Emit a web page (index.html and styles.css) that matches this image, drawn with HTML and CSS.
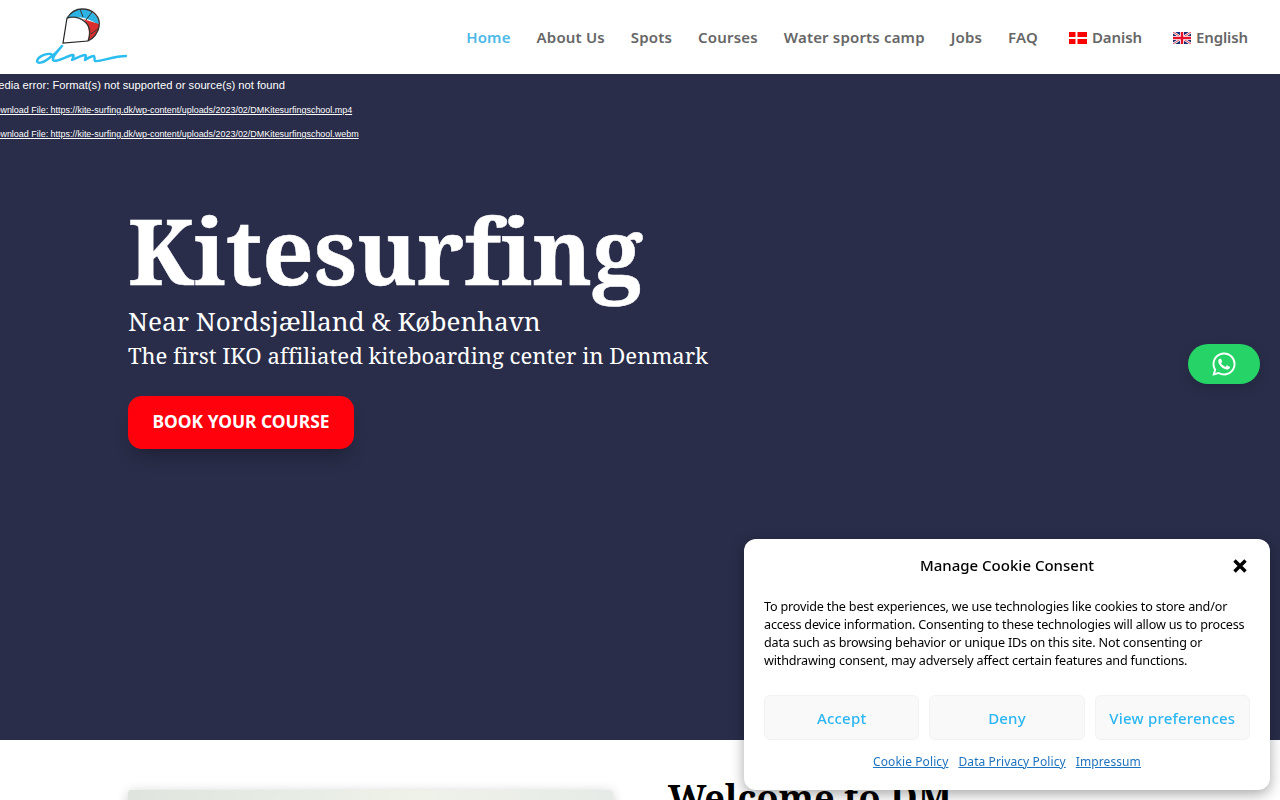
FILE: index.html
```html
<!DOCTYPE html>
<html lang="en">
<head>
    <meta charset="UTF-8">
    <title>Kitesurfing</title>
    <link rel="stylesheet" href="styles.css">
</head>
<body>
    <!-- Header -->
    <header class="header">
        <a class="logo" href="#">
            <svg width="92" height="58" viewBox="0 0 92 58">
                <path d="M32 10 C36 4 42 1 47 1 C55 1 62 7 64 14 L63 17 C56 11 43 7 32 10 Z" fill="#2eb4e4"/>
                <path d="M48 11 L64 16 C65 22 61 29 53 33 C55 25 54 16 48 11 Z" fill="#d9302f"/>
                <path d="M32 10 L28 35 L53 33" fill="none" stroke="#222" stroke-width="1.2"/>
                <path d="M32 10 C43 7 60 14 53 33" fill="none" stroke="#333" stroke-width="1.3"/>
                <path d="M32 10 C36 4 42 1 47 1 C58 1 66 9 64 19 C63 25 58 31 53 33" fill="none" stroke="#333" stroke-width="1.3"/>
                <path d="M45 1 L48 9 M57 4 L51 12 M64 20 L56 26" fill="none" stroke="#333" stroke-width="1"/>
                <path d="M16 46 C10 45 3 49 2 53 C2 56 8 55 13 51 C19 47 24 42 27 38 C22 44 17 49 18 52 C20 55 30 49 37 47 C40 46 38 50 37 52 C42 50 47 47 50 47 C52 47 50 50 50 52 C53 50 56 48 59 48 C60 49 59 51 60 53 C66 54 78 48 91 48" fill="none" stroke="#2bbdf0" stroke-width="2.4" stroke-linecap="round" stroke-linejoin="round"/>
            </svg>
        </a>
        <nav class="nav">
            <a class="nav-link active" href="#">Home</a>
            <a class="nav-link" href="#">About Us</a>
            <a class="nav-link" href="#">Spots</a>
            <a class="nav-link" href="#">Courses</a>
            <a class="nav-link" href="#">Water sports camp</a>
            <a class="nav-link" href="#">Jobs</a>
            <a class="nav-link" href="#">FAQ</a>
            <a class="nav-link lang first-lang" href="#">
                <svg class="flag" viewBox="0 0 18 12"><rect width="18" height="12" fill="#f00"/><path d="M0 6H18M7.5 0V12" stroke="#fff" stroke-width="2"/></svg>
                Danish
            </a>
            <a class="nav-link lang" href="#">
                <svg class="flag" viewBox="0 0 18 12"><rect width="18" height="12" fill="#1b2a73"/><path d="M0 0L18 12M18 0L0 12" stroke="#fff" stroke-width="2.4"/><path d="M0 0L18 12M18 0L0 12" stroke="#d8142a" stroke-width=".8"/><path d="M0 6H18M9 0V12" stroke="#fff" stroke-width="4"/><path d="M0 6H18M9 0V12" stroke="#e8112d" stroke-width="2.4"/></svg>
                English
            </a>
        </nav>
    </header>

    <!-- Hero mit Video-Fehler -->
    <section class="hero">
        <div class="media-error">
            <p class="media-msg">Media error: Format(s) not supported or source(s) not found</p>
            <p class="media-file"><a href="#">Download File: https://kite-surfing.dk/wp-content/uploads/2023/02/DMKitesurfingschool.mp4</a></p>
            <p class="media-file"><a href="#">Download File: https://kite-surfing.dk/wp-content/uploads/2023/02/DMKitesurfingschool.webm</a></p>
        </div>
        <div class="hero-text">
            <h1>Kitesurfing</h1>
            <h2>Near Nordsjælland &amp; København</h2>
            <h3>The first IKO affiliated kiteboarding center in Denmark</h3>
            <a class="book-btn" href="#">BOOK YOUR COURSE</a>
        </div>
    </section>

    <!-- Willkommen -->
    <section class="welcome">
        <div class="welcome-photo"></div>
        <h2 class="welcome-title">Welcome to DM</h2>
    </section>

    <!-- WhatsApp -->
    <a class="whatsapp" href="#">
        <svg width="24" height="24" viewBox="0 0 24 24">
            <path fill="#fff" fill-rule="evenodd" d="M12.04 0.5C5.7 0.5 .55 5.64 .55 11.98c0 2.03.53 4 1.54 5.74L.45 23.7l6.13-1.6a11.45 11.45 0 0 0 5.46 1.39c6.34 0 11.5-5.15 11.5-11.49 0-3.07-1.2-5.96-3.37-8.13A11.42 11.42 0 0 0 12.04 .5zm0 21.05c-1.72 0-3.4-.46-4.87-1.33l-.35-.21-3.64.95.97-3.55-.23-.36a9.51 9.51 0 0 1-1.46-5.07c0-5.27 4.3-9.56 9.58-9.56 2.56 0 4.96 1 6.77 2.81a9.5 9.5 0 0 1 2.8 6.76c0 5.28-4.3 9.56-9.57 9.56zm5.25-7.17c-.29-.14-1.7-.84-1.96-.94-.26-.1-.45-.14-.64.15-.19.29-.74.93-.9 1.12-.17.19-.33.22-.62.07-.29-.14-1.21-.45-2.3-1.42-.85-.76-1.43-1.7-1.6-1.98-.17-.29-.02-.44.13-.59.13-.13.29-.33.43-.5.14-.17.19-.29.29-.48.1-.19.05-.36-.02-.5-.07-.14-.64-1.55-.88-2.12-.23-.56-.47-.48-.64-.49h-.55c-.19 0-.5.07-.76.36-.26.29-1 .98-1 2.39 0 1.41 1.03 2.77 1.17 2.96.14.19 2.02 3.09 4.9 4.33.68.3 1.22.47 1.63.6.69.22 1.31.19 1.81.11.55-.08 1.7-.69 1.94-1.36.24-.67.24-1.24.17-1.36-.07-.12-.26-.19-.55-.34z"/>
        </svg>
    </a>

    <!-- Cookie Banner -->
    <div class="cookie">
        <div class="cookie-head">
            <span class="cookie-title">Manage Cookie Consent</span>
            <svg class="cookie-close" width="16" height="16" viewBox="0 0 16 16"><path d="M2.5 2.5L13.5 13.5M13.5 2.5L2.5 13.5" stroke="#000" stroke-width="3.4" fill="none"/></svg>
        </div>
        <p class="cookie-text">To provide the best experiences, we use technologies like cookies to store and/or access device information. Consenting to these technologies will allow us to process data such as browsing behavior or unique IDs on this site. Not consenting or withdrawing consent, may adversely affect certain features and functions.</p>
        <div class="cookie-btns">
            <button class="cookie-btn">Accept</button>
            <button class="cookie-btn">Deny</button>
            <button class="cookie-btn">View preferences</button>
        </div>
        <div class="cookie-links">
            <a href="#">Cookie Policy</a>
            <a href="#">Data Privacy Policy</a>
            <a href="#">Impressum</a>
        </div>
    </div>
</body>
</html>
```
FILE: styles.css
```css
html, body {
    height: 800px;
    overflow: hidden;
}
body {
    margin: 0;
    font-family: "Noto Sans", Arial, sans-serif;
    background: #fff;
}
a {
    text-decoration: none;
}
.header {
    height: 74px;
    display: flex;
    justify-content: space-between;
    align-items: center;
    padding: 0 32px 0 35px;
    background: #fff;
}
.logo {
    display: flex;
    margin-top: -1px;
}
.nav {
    display: flex;
    align-items: center;
    gap: 26px;
}
.nav-link {
    display: flex;
    align-items: center;
    font-size: 15px;
    font-weight: 600;
    letter-spacing: 0.17px;
    color: #666;
}
.nav-link.active {
    color: #4cb9e8;
}
.nav-link.lang {
    letter-spacing: -0.1px;
}
.first-lang {
    margin-left: 5px;
}
.lang + .lang {
    margin-left: 5px;
}
.flag {
    width: 18px;
    height: 12px;
    margin: 2px 5px 0 0;
}
.hero {
    height: 666px;
    background: #292d49;
    color: #fff;
    position: relative;
}
.media-error {
    position: absolute;
    top: 0;
    left: -11px;
    font-family: "Liberation Sans", Arial, sans-serif;
}
.media-msg {
    margin: 5px 0 0;
    font-size: 11.2px;
    line-height: 13px;
}
.media-file {
    margin: 12px 0 0;
    font-size: 8.95px;
    line-height: 12px;
}
.media-file a {
    color: #fff;
    text-decoration: underline;
}
.hero-text {
    padding: 126px 0 0 128px;
    font-family: "Noto Serif", "DejaVu Serif", serif;
    font-variant-ligatures: none;
}
.hero-text h1 {
    margin: 0;
    font-size: 90px;
    line-height: 100px;
    font-weight: 700;
    -webkit-text-stroke: 0.5px #fff;
}
.hero-text h2 {
    margin: 3px 0 0;
    font-size: 26.15px;
    line-height: 36px;
    font-weight: 400;
}
.hero-text h3 {
    margin: -1px 0 0;
    font-size: 22.08px;
    line-height: 34px;
    font-weight: 400;
}
.book-btn {
    display: inline-block;
    margin-top: 24px;
    padding: 0 24.5px;
    height: 53px;
    line-height: 51px;
    background: #ff000d;
    border-radius: 14px;
    color: #fff;
    font-family: "Noto Sans", Arial, sans-serif;
    font-size: 17.4px;
    font-weight: 700;
    box-shadow: 0 12px 18px -6px rgba(0, 0, 0, 0.3);
}
.welcome {
    display: flex;
    height: 60px;
    overflow: hidden;
    padding: 0 128px;
    gap: 55px;
}
.welcome-photo {
    width: 485px;
    height: 300px;
    flex-shrink: 0;
    margin-top: 50px;
    border-radius: 3px;
    background: linear-gradient(90deg, #dfe5de, #eef2e9 60%, #e7ebe7);
    box-shadow: 0 2px 12px rgba(0, 0, 0, 0.2);
}
.welcome-title {
    margin: 33px 0 0;
    font-family: "Noto Serif", "DejaVu Serif", serif;
    font-size: 36px;
    line-height: 50px;
    font-weight: 700;
    color: #000;
}
.whatsapp {
    position: fixed;
    top: 344px;
    left: 1188px;
    width: 72px;
    height: 40px;
    display: flex;
    align-items: center;
    justify-content: center;
    border-radius: 20px;
    background: #25d366;
    box-shadow: 0 4px 12px rgba(0, 0, 0, 0.15);
}
.cookie {
    position: fixed;
    left: 744px;
    top: 539px;
    width: 526px;
    height: 251px;
    box-sizing: border-box;
    padding: 16px 20px 0;
    background: #fff;
    border-radius: 12px;
    box-shadow: 0 4px 14px rgba(0, 0, 0, 0.35);
    font-size: 12.6px;
    color: #000;
}
.cookie-head {
    position: relative;
    text-align: center;
    line-height: 21px;
}
.cookie-title {
    font-size: 15px;
    font-weight: 500;
}
.cookie-close {
    position: absolute;
    right: 2px;
    top: 3px;
}
.cookie-text {
    margin: 21px 0 0;
    line-height: 18px;
    letter-spacing: -0.18px;
}
.cookie-btns {
    display: flex;
    gap: 10px;
    margin-top: 25px;
}
.cookie-btn {
    flex: 1 1 0;
    height: 45px;
    padding: 0;
    border: 1px solid #f2f2f2;
    border-radius: 6px;
    background: #f9f9f9;
    color: #2bb5f2;
    font-family: inherit;
    font-size: 15px;
    font-weight: 500;
    letter-spacing: 0.2px;
}
.cookie-links {
    display: flex;
    justify-content: center;
    gap: 10px;
    margin-top: 13px;
    font-size: 12px;
    letter-spacing: 0.1px;
    line-height: 18px;
}
.cookie-links a {
    color: #1e73be;
    text-decoration: underline;
}
```
